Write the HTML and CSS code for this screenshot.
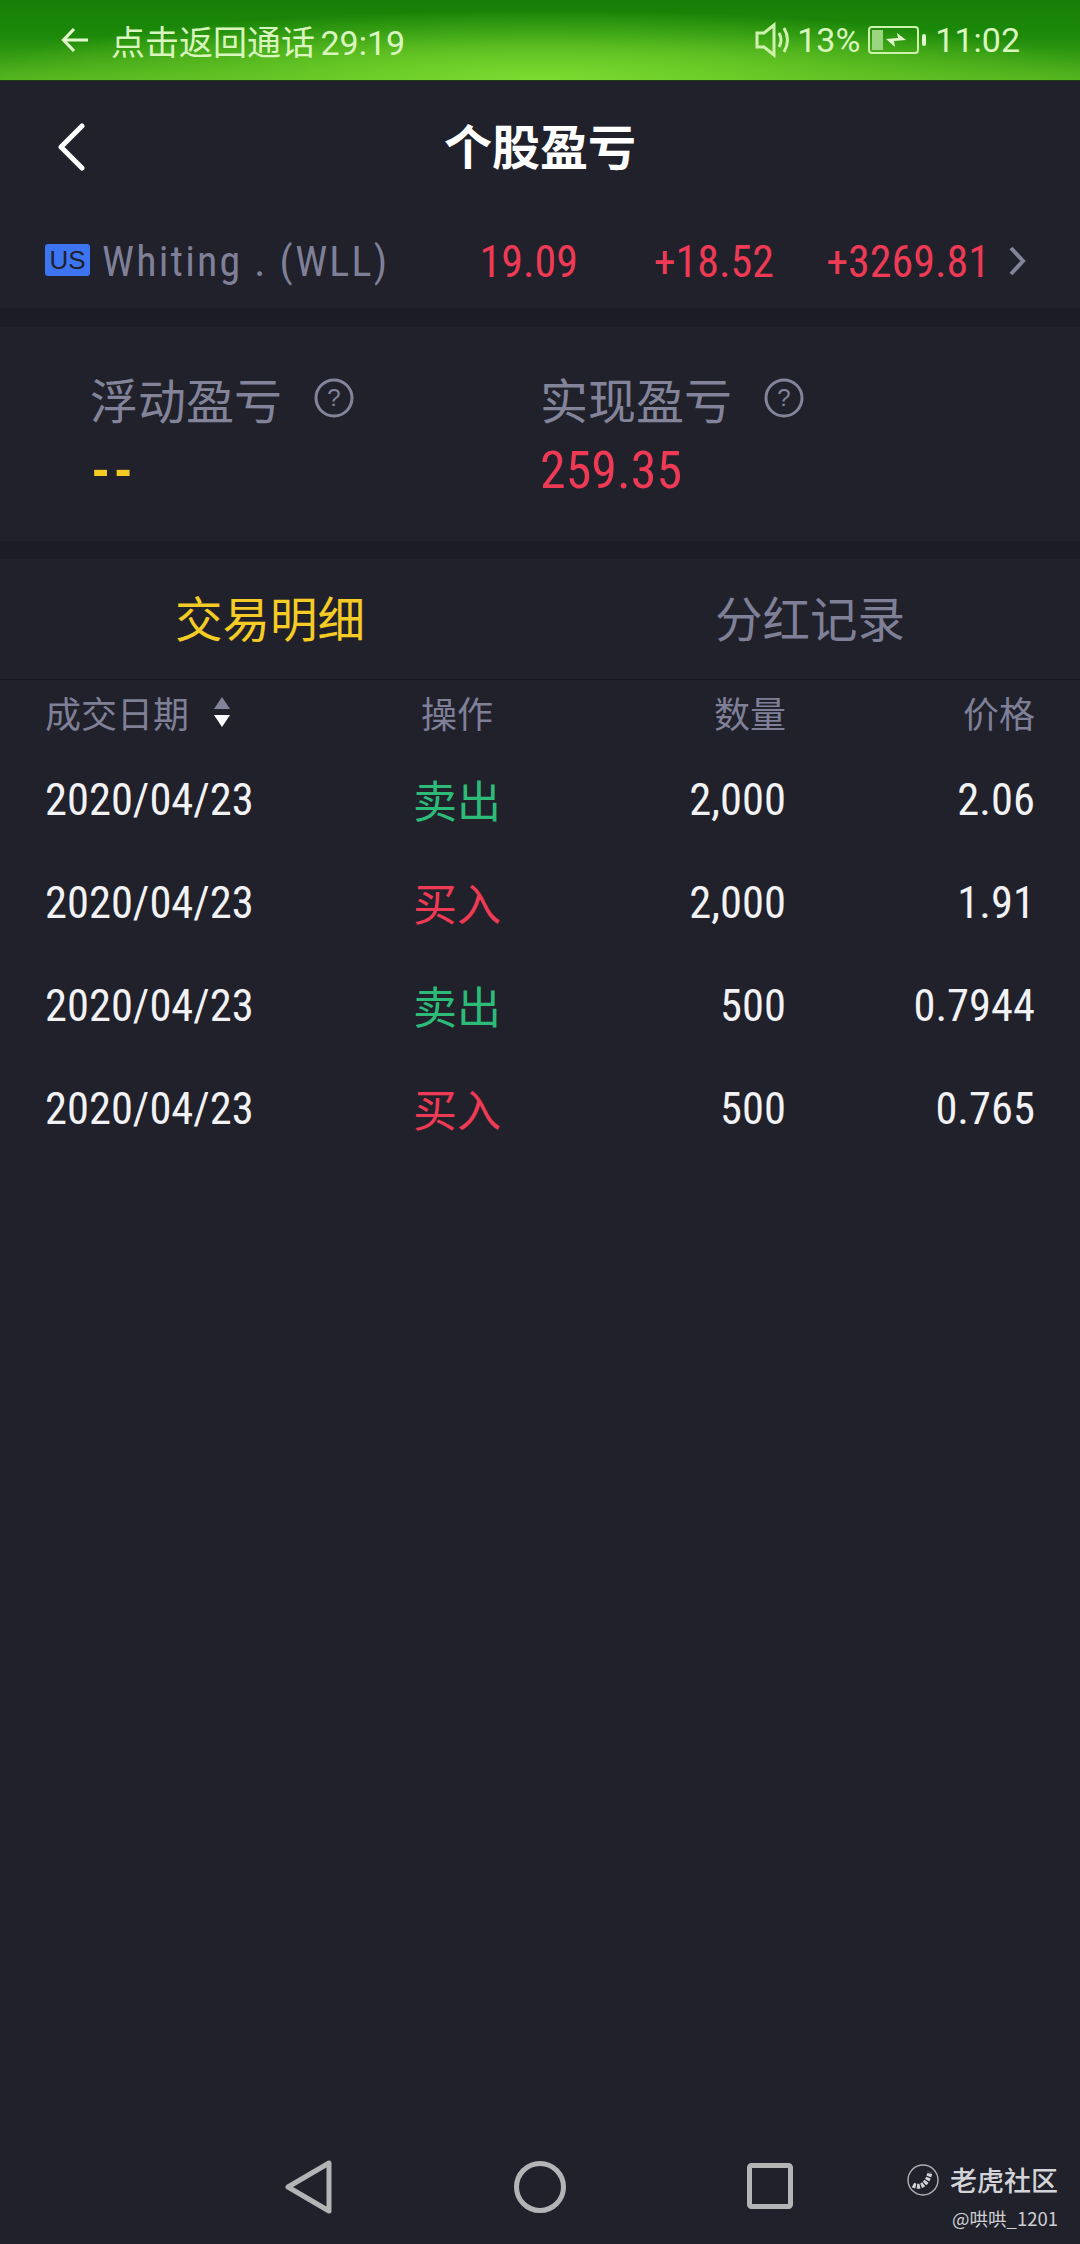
FILE: index.html
```html
<!DOCTYPE html>
<html lang="zh-CN">
<head>
<meta charset="utf-8">
<title>个股盈亏</title>
<link rel="stylesheet" href="styles.css">
</head>
<body>
<div class="page">
  <div class="status">
    <div class="status-left">
      <svg class="st-arrow" viewBox="0 0 28 26" width="28" height="26"><path d="M27 13H3M13 2 2.5 13 13 24" fill="none" stroke="#e2f8cc" stroke-width="3.2"/></svg>
      <span class="st-call">点击返回通话 29:19</span>
    </div>
    <div class="status-right">
      <svg viewBox="0 0 36 36" width="36" height="36"><path d="M2 11h7L19 3v30L9 25H2z" fill="none" stroke="#cdf2ae" stroke-width="3"/><path d="M24 11q4 7 0 14M29 6q7 12 0 24" fill="none" stroke="#cdf2ae" stroke-width="3"/></svg>
      <span class="st-pct">13%</span>
      <svg class="st-bat" viewBox="0 0 58 28" width="58" height="28"><rect x="1" y="1" width="49" height="26" rx="3" fill="none" stroke="#cdf2ae" stroke-width="2"/><rect x="4" y="4" width="11" height="20" fill="#9bd47e"/><path d="M18 13l12-1-1-5 9 7-12 1 1 6z" fill="#e2f8cc"/><rect x="54" y="8" width="4" height="12" rx="2" fill="#e2f8cc"/></svg>
      <span class="st-time">11:02</span>
    </div>
  </div>

  <header class="topbar">
    <svg class="back" viewBox="0 0 30 48" width="30" height="48"><path d="M26 3 5 24l21 21" fill="none" stroke="#fff" stroke-width="5" stroke-linecap="round" stroke-linejoin="round"/></svg>
    <h1 class="title">个股盈亏</h1>
  </header>

  <section class="stock">
    <span class="badge">US</span>
    <span class="stock-name">Whiting . (WLL)</span>
    <span class="stock-num n1">19.09</span>
    <span class="stock-num n2">+18.52</span>
    <span class="stock-num n3">+3269.81</span>
    <svg class="chev" viewBox="0 0 18 30" width="18" height="30"><path d="M3 2l12 13L3 28" fill="none" stroke="#83849a" stroke-width="4"/></svg>
  </section>

  <section class="pnl">
    <div class="pnl-col">
      <div class="pnl-label">浮动盈亏<svg class="help" viewBox="0 0 40 40" width="40" height="40"><circle cx="20" cy="20" r="18" fill="none" stroke="#83849a" stroke-width="3"/><text x="20" y="28" class="help-q">?</text></svg></div>
      <div class="pnl-value yellow dashes">--</div>
    </div>
    <div class="pnl-col">
      <div class="pnl-label">实现盈亏<svg class="help" viewBox="0 0 40 40" width="40" height="40"><circle cx="20" cy="20" r="18" fill="none" stroke="#83849a" stroke-width="3"/><text x="20" y="28" class="help-q">?</text></svg></div>
      <div class="pnl-value red">259.35</div>
    </div>
  </section>

  <section class="tabs">
    <div class="tab active">交易明细</div>
    <div class="tab">分红记录</div>
  </section>

  <section class="table">
    <div class="thead">
      <div class="th-date">成交日期<svg class="sort" viewBox="0 0 18 32" width="18" height="32"><path d="M9 1l8 12H1z" fill="#83849a"/><path d="M1 19h16L9 31z" fill="#fff"/></svg></div>
      <div class="c">操作</div>
      <div class="r">数量</div>
      <div class="r">价格</div>
    </div>
    <div class="row"><div class="date">2020/04/23</div><div class="c op green">卖出</div><div class="r">2,000</div><div class="r">2.06</div></div>
    <div class="row"><div class="date">2020/04/23</div><div class="c op red">买入</div><div class="r">2,000</div><div class="r">1.91</div></div>
    <div class="row"><div class="date">2020/04/23</div><div class="c op green">卖出</div><div class="r">500</div><div class="r">0.7944</div></div>
    <div class="row"><div class="date">2020/04/23</div><div class="c op red">买入</div><div class="r">500</div><div class="r">0.765</div></div>
  </section>

  <nav class="navbar">
    <svg viewBox="0 0 48 54" width="48" height="54"><path d="M44 3v48L3 27z" fill="none" stroke="#b4b4b6" stroke-width="5" stroke-linejoin="round"/></svg>
    <svg viewBox="0 0 54 54" width="54" height="54"><circle cx="27" cy="27" r="23.5" fill="none" stroke="#b4b4b6" stroke-width="5"/></svg>
    <svg viewBox="0 0 48 48" width="48" height="48"><rect x="2.5" y="2.5" width="41" height="41" rx="2" fill="none" stroke="#b4b4b6" stroke-width="5"/></svg>
  </nav>

  <div class="mark">
    <div class="mark-top">
      <svg viewBox="0 0 32 32" width="32" height="32"><circle cx="16" cy="16" r="15" fill="none" stroke="#b0b0b4" stroke-width="1.4"/><path d="M6 21c7 4 15-1 17-13" fill="none" stroke="#d4d4d8" stroke-width="5" stroke-dasharray="3 1.2"/></svg>
      <span>老虎社区</span>
    </div>
    <div class="mark-user">@哄哄_1201</div>
  </div>
</div>
</body>
</html>
```
FILE: styles.css
```css
* { box-sizing: border-box; margin: 0; padding: 0; }
html, body { width: 1080px; height: 2244px; background: #20212b; overflow: hidden; }
body { font-family: "Noto Sans CJK SC", "Noto Sans", sans-serif; color: #fff; }
.page { position: relative; width: 1080px; height: 2244px; display: flex; flex-direction: column; }

.status { height: 81px; flex: none; display: flex; justify-content: space-between; align-items: center; padding: 0 60px 0 61px;
  background: radial-gradient(ellipse 560px 70px at 50% 100%, #7cdc30 0%, rgba(110,205,40,.75) 45%, rgba(60,160,20,0) 100%), linear-gradient(#167f06 0%, #1d8a0a 45%, #54b41f 100%);
  color: #d9f6bf; font-size: 34px; font-family: Roboto, "Noto Sans CJK SC", sans-serif; border-bottom: 1px solid #1b3a14; }
.status-left, .status-right { display: flex; align-items: center; }
.st-arrow { margin-right: 22px; }
.st-call { word-spacing: -3px; }
.st-pct { margin: 0 8px 0 6px; }
.st-bat { margin-right: 9px; }

.topbar { height: 128px; flex: none; position: relative; display: flex; justify-content: center; align-items: center; }
.back { position: absolute; left: 56px; top: 42px; }
.title { font-size: 48px; font-weight: 700; line-height: 1; margin-top: -3px; }

.stock { height: 99px; flex: none; display: flex; align-items: center; padding: 0 0 0 45px; }
.badge { width: 45px; height: 32px; margin-top: 2px; background: #3c74f2; border-radius: 3px; color: #20212b; font: 26px/32px "Liberation Sans", sans-serif; text-align: center; flex: none; }
.stock-name, .stock-num, .pnl-value, .row { font-family: Roboto, "Liberation Sans", sans-serif; font-stretch: 75%; }
.stock-name { margin-left: 12px; width: 291px; color: #7f8097; font-size: 42px; line-height: 1; letter-spacing: 2.2px; white-space: nowrap; padding-top: 6px; }
.stock-num { color: #ee3a55; font-size: 44px; line-height: 1; text-align: right; flex: none; white-space: nowrap; padding-top: 6px; }
.n1 { width: 185px; } .n2 { width: 196px; } .n3 { width: 216px; }
.chev { margin-left: 18px; margin-top: 4px; }

.pnl { flex: none; height: 251px; display: flex; padding: 40px 0 0 90px; border-top: 19px solid #1b1c25; border-bottom: 18px solid #1b1c25; }
.pnl-col { width: 450px; }
.pnl-label { display: flex; align-items: center; color: #83849a; font-size: 48px; line-height: 62px; }
.help { margin-left: 32px; }
.help-q { font: 24px "Liberation Sans", sans-serif; fill: #83849a; text-anchor: middle; }
.pnl-value { font-size: 52px; line-height: 64px; margin-top: 10px; }
.dashes { font-weight: 700; letter-spacing: 3px; font-size: 54px; padding-left: 1px; }

.tabs { height: 121px; flex: none; display: grid; grid-template-columns: 1fr 1fr; align-items: center; text-align: center; padding-bottom: 5px; border-bottom: 1px solid #17181f; }
.tab { font-size: 47.5px; color: #7f8097; line-height: 1; }
.tab.active { color: #f5cb25; }

.table { flex: none; padding: 0 45px; }
.thead, .row { display: grid; grid-template-columns: 321px 182px 238px 249px; align-items: center; }
.thead { height: 69px; padding-bottom: 5px; color: #7f8097; font-size: 36px; }
.th-date { display: flex; align-items: center; }
.sort { margin-left: 24px; }
.row { height: 103px; font-size: 44.5px; line-height: 1; color: #f2f2f5; }
.c { text-align: center; }
.r { text-align: right; }
.op { font: 44px/1 "Noto Sans CJK SC", sans-serif; padding-bottom: 4px; }
.green { color: #2dbb78; }
.red { color: #ee3a55; }
.yellow { color: #f5cb25; }

.navbar { margin-top: auto; height: 118px; flex: none; display: flex; align-items: center; justify-content: center; column-gap: 180px; padding-top: 4px; }

.mark { position: absolute; right: 22px; top: 2160px; text-align: right; color: #d4d4d8; }
.mark-top { display: flex; align-items: center; font-size: 27px; font-weight: 500; line-height: 40px; gap: 11px; }
.mark-user { font-size: 18.5px; line-height: 30px; margin-top: 3px; color: #cfcfd3; }
```
